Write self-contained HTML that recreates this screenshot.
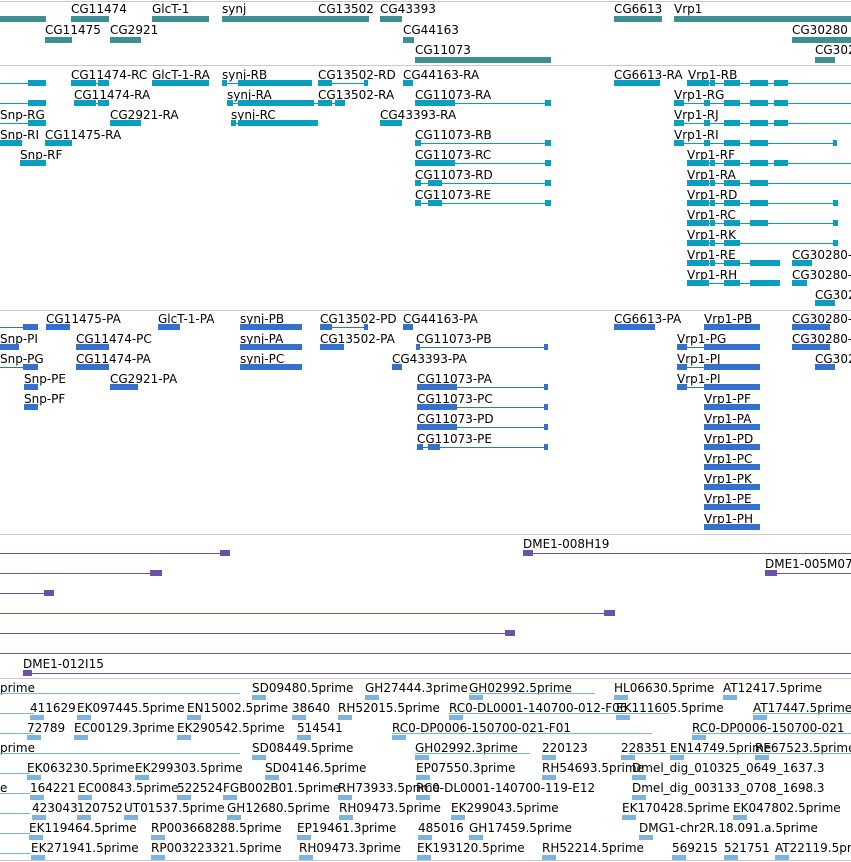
<!DOCTYPE html>
<html><head><meta charset="utf-8">
<style>
html,body{margin:0;padding:0;background:#fff;width:851px;height:862px;overflow:hidden;position:relative}
.t{position:absolute;font-family:"DejaVu Sans","Liberation Sans",sans-serif;font-size:12px;line-height:14px;color:#000;white-space:nowrap}
.r{position:absolute}
</style></head><body>
<div id="c"></div>
<script>
var c=document.getElementById('c'),h='';
function L(x,y,t){h+='<div class="t" style="left:'+x+'px;top:'+(y-2)+'px">'+t+'</div>';}
function B(x,y,w,hh,col){h+='<div class="r" style="left:'+x+'px;top:'+y+'px;width:'+w+'px;height:'+hh+'px;background:'+col+'"></div>';}
function SEP(y){B(0,y,851,1,'#c8c8c8');}
// gene model: line x1..x2 at y (center), exons list [x,w]
function G(x1,x2,y,ex,col,hh){hh=hh||6;B(x1,y,x2-x1,1,col);for(var i=0;i<ex.length;i++)B(ex[i][0],y-Math.floor(hh/2),ex[i][1],hh,col);}
// Track 1
var T1='#3f8e93';
SEP(1);
L(71,4,'CG11474');L(152,4,'GlcT-1');L(222,4,'synj');L(318,4,'CG13502');L(380,4,'CG43393');L(614,4,'CG6613');L(674,4,'Vrp1');
B(0,16,46,6,T1);B(71,16,38,6,T1);B(152,16,57,6,T1);B(222,16,96,6,T1);B(318,16,51,6,T1);B(380,16,22,6,T1);B(614,16,48,6,T1);B(674,16,177,6,T1);
L(45,25,'CG11475');L(110,25,'CG2921');L(403,25,'CG44163');L(792,25,'CG30280');
B(45,37,27,6,T1);B(110,37,31,6,T1);B(403,37,11,6,T1);B(792,37,59,6,T1);
L(415,45,'CG11073');L(815,45,'CG302');
B(415,57,136,6,T1);B(815,57,20,6,T1);
SEP(65);
// Track 2
var C2='#0a9fc0';
var r=[70,90,110,130,150,170,190,210,230,250,270,290];
function Y(i){return r[i]+13;}
L(71,r[0],'CG11474-RC');L(152,r[0],'GlcT-1-RA');L(222,r[0],'synj-RB');L(318,r[0],'CG13502-RD');L(403,r[0],'CG44163-RA');L(614,r[0],'CG6613-RA');L(688,r[0],'Vrp1-RB');
G(0,46,Y(0),[[28,18]],C2);G(71,109,Y(0),[[71,12],[82,14],[98,11]],C2);G(152,209,Y(0),[[152,57]],C2);G(222,312,Y(0),[[222,5],[238,28],[266,38],[304,8]],C2);G(318,368,Y(0),[[318,14],[364,4]],C2);G(403,413,Y(0),[[403,10]],C2);G(614,660,Y(0),[[614,15],[629,15],[643,17]],C2);
G(687,851,Y(0),[[687,22],[710,5],[724,16],[750,18],[774,14]],C2);
L(74,r[1],'CG11474-RA');L(227,r[1],'synj-RA');L(318,r[1],'CG13502-RA');L(415,r[1],'CG11073-RA');L(674,r[1],'Vrp1-RG');
G(0,46,Y(1),[[28,18]],C2);G(74,109,Y(1),[[74,22],[98,11]],C2);G(227,345,Y(1),[[227,6],[238,28],[266,38],[304,10],[318,14],[335,10]],C2);G(415,551,Y(1),[[415,40],[545,6]],C2);G(674,851,Y(1),[[674,10],[704,6],[724,16],[750,18],[774,14]],C2);
L(0,r[2],'Snp-RG');L(110,r[2],'CG2921-RA');L(231,r[2],'synj-RC');L(380,r[2],'CG43393-RA');L(674,r[2],'Vrp1-RJ');
G(0,46,Y(2),[[28,18]],C2);G(110,141,Y(2),[[110,31]],C2);G(231,318,Y(2),[[231,5],[238,28],[266,52]],C2);G(380,402,Y(2),[[380,22]],C2);G(674,851,Y(2),[[674,10],[704,6],[724,16],[750,18],[774,14]],C2);
L(0,r[3],'Snp-RI');L(45,r[3],'CG11475-RA');L(415,r[3],'CG11073-RB');L(674,r[3],'Vrp1-RI');
G(0,22,Y(3),[[0,22]],C2);G(45,72,Y(3),[[45,27]],C2);G(415,551,Y(3),[[415,6],[545,6]],C2);G(674,837,Y(3),[[674,10],[704,6],[724,16],[750,18],[774,0],[833,4]],C2);
L(20,r[4],'Snp-RF');L(415,r[4],'CG11073-RC');L(687,r[4],'Vrp1-RF');
G(20,46,Y(4),[[20,26]],C2);G(415,551,Y(4),[[415,40],[545,6]],C2);G(687,851,Y(4),[[687,22],[710,5],[724,16],[750,18],[774,14]],C2);
L(415,r[5],'CG11073-RD');L(687,r[5],'Vrp1-RA');
G(415,551,Y(5),[[415,6],[428,14],[545,6]],C2);G(687,851,Y(5),[[687,22],[710,5],[724,16],[750,18]],C2);
L(415,r[6],'CG11073-RE');L(687,r[6],'Vrp1-RD');
G(415,551,Y(6),[[415,6],[428,14],[545,6]],C2);G(687,838,Y(6),[[687,22],[710,5],[724,16],[750,18],[774,0],[833,5]],C2);
L(687,r[7],'Vrp1-RC');G(687,838,Y(7),[[687,22],[710,5],[724,16],[750,18],[833,5]],C2);
L(687,r[8],'Vrp1-RK');G(687,838,Y(8),[[687,22],[710,5],[724,16],[833,5]],C2);
L(687,r[9],'Vrp1-RE');L(792,r[9],'CG30280-');G(687,780,Y(9),[[687,22],[710,5],[724,16],[750,30]],C2);G(792,812,Y(9),[[792,20]],C2);
L(687,r[10],'Vrp1-RH');L(792,r[10],'CG30280-');G(687,780,Y(10),[[687,22],[724,16],[750,30]],C2);G(792,807,Y(10),[[792,15]],C2);
L(815,r[11],'CG3028');G(815,835,Y(11),[[815,20]],C2);
SEP(310);
// Track 3
var C3='#3470cc';
var s=[314,334,354,374,394,414,434,454,474,494,514];
function Z(i){return s[i]+13;}
L(46,s[0],'CG11475-PA');L(158,s[0],'GlcT-1-PA');L(240,s[0],'synj-PB');L(320,s[0],'CG13502-PD');L(403,s[0],'CG44163-PA');L(614,s[0],'CG6613-PA');L(704,s[0],'Vrp1-PB');L(792,s[0],'CG30280-');
G(0,38,Z(0),[[23,15]],C3);G(46,70,Z(0),[[46,24]],C3);G(158,180,Z(0),[[158,22]],C3);G(240,302,Z(0),[[240,62]],C3);G(320,368,Z(0),[[320,12],[364,4]],C3);G(403,413,Z(0),[[403,10]],C3);G(614,655,Z(0),[[614,41]],C3);G(704,760,Z(0),[[704,56]],C3);G(792,830,Z(0),[[792,38]],C3);
L(0,s[1],'Snp-PI');L(76,s[1],'CG11474-PC');L(240,s[1],'synj-PA');L(320,s[1],'CG13502-PA');L(416,s[1],'CG11073-PB');L(677,s[1],'Vrp1-PG');L(792,s[1],'CG30280-');
G(0,19,Z(1),[[0,19]],C3);G(76,109,Z(1),[[76,33]],C3);G(240,302,Z(1),[[240,62]],C3);G(320,344,Z(1),[[320,24]],C3);G(416,548,Z(1),[[416,4],[544,4]],C3);G(677,760,Z(1),[[677,10],[704,56]],C3);G(792,830,Z(1),[[792,38]],C3);
L(0,s[2],'Snp-PG');L(76,s[2],'CG11474-PA');L(240,s[2],'synj-PC');L(392,s[2],'CG43393-PA');L(677,s[2],'Vrp1-PJ');L(815,s[2],'CG302');
G(0,38,Z(2),[[23,15]],C3);G(76,109,Z(2),[[76,33]],C3);G(240,302,Z(2),[[240,62]],C3);G(392,402,Z(2),[[392,10]],C3);G(677,760,Z(2),[[677,10],[704,56]],C3);G(815,835,Z(2),[[815,20]],C3);
L(24,s[3],'Snp-PE');L(110,s[3],'CG2921-PA');L(417,s[3],'CG11073-PA');L(677,s[3],'Vrp1-PI');
G(24,38,Z(3),[[24,14]],C3);G(110,138,Z(3),[[110,28]],C3);G(417,548,Z(3),[[417,40],[544,4]],C3);G(677,760,Z(3),[[677,10],[704,56]],C3);
L(24,s[4],'Snp-PF');L(417,s[4],'CG11073-PC');L(704,s[4],'Vrp1-PF');
G(24,38,Z(4),[[24,14]],C3);G(417,548,Z(4),[[417,40],[544,4]],C3);G(704,760,Z(4),[[704,56]],C3);
L(417,s[5],'CG11073-PD');L(704,s[5],'Vrp1-PA');G(417,548,Z(5),[[417,40],[544,4]],C3);G(704,760,Z(5),[[704,56]],C3);
L(417,s[6],'CG11073-PE');L(704,s[6],'Vrp1-PD');G(417,548,Z(6),[[417,6],[428,12],[544,4]],C3);G(704,760,Z(6),[[704,56]],C3);
L(704,s[7],'Vrp1-PC');G(704,760,Z(7),[[704,56]],C3);
L(704,s[8],'Vrp1-PK');G(704,760,Z(8),[[704,56]],C3);
L(704,s[9],'Vrp1-PE');G(704,760,Z(9),[[704,56]],C3);
L(704,s[10],'Vrp1-PH');G(704,760,Z(10),[[704,56]],C3);
SEP(534);
// Track 4
var P='#6b52a8';
L(523,539,'DME1-008H19');G(523,851,553,[[523,10]],P);
G(0,230,553,[[220,10]],P);
L(765,559,'DME1-005M07');G(765,851,573,[[765,12]],P);
G(0,162,573,[[150,12]],P);
G(0,54,593,[[44,10]],P);
G(0,615,613,[[604,11]],P);
G(0,515,633,[[505,10]],P);
G(0,851,653,[],P);
L(23,659,'DME1-012I15');G(23,851,673,[[23,9]],P);
SEP(678);
// Track 5
var E='#7eb3de';
var rows=[
[[0,'prime'],[252,'SD09480.5prime'],[365,'GH27444.3prime'],[469,'GH02992.5prime'],[614,'HL06630.5prime'],[723,'AT12417.5prime']],
[[30,'411629'],[77,'EK097445.5prime'],[187,'EN15002.5prime'],[292,'38640'],[338,'RH52015.5prime'],[449,'RC0-DL0001-140700-012-F06'],[616,'EK111605.5prime'],[753,'AT17447.5prime']],
[[27,'72789'],[74,'EC00129.3prime'],[177,'EK290542.5prime'],[297,'514541'],[392,'RC0-DP0006-150700-021-F01'],[692,'RC0-DP0006-150700-021']],
[[0,'prime'],[252,'SD08449.5prime'],[415,'GH02992.3prime'],[542,'220123'],[621,'228351'],[670,'EN14749.5prime'],[755,'RE67523.5prime']],
[[27,'EK063230.5prime'],[135,'EK299303.5prime'],[265,'SD04146.5prime'],[416,'EP07550.3prime'],[542,'RH54693.5prime'],[632,'Dmel_dig_010325_0649_1637.3']],
[[0,'e'],[30,'164221'],[78,'EC00843.5prime'],[177,'522524'],[223,'FGB002B01.5prime'],[338,'RH73933.5prime'],[416,'RC0-DL0001-140700-119-E12'],[632,'Dmel_dig_003133_0708_1698.3']],
[[32,'423043'],[77,'120752'],[124,'UT01537.5prime'],[227,'GH12680.5prime'],[339,'RH09473.5prime'],[451,'EK299043.5prime'],[622,'EK170428.5prime'],[733,'EK047802.5prime']],
[[29,'EK119464.5prime'],[151,'RP003668288.5prime'],[297,'EP19461.3prime'],[418,'485016'],[469,'GH17459.5prime'],[639,'DMG1-chr2R.18.091.a.5prime']],
[[31,'EK271941.5prime'],[151,'RP003223321.5prime'],[299,'RH09473.3prime'],[417,'EK193120.5prime'],[542,'RH52214.5prime'],[672,'569215'],[724,'521751'],[775,'AT22119.5prime']]
];
for(var i=0;i<rows.length;i++){var y=683+i*20;for(var j=0;j<rows[i].length;j++){var it=rows[i][j];L(it[0],y,it[1]);if(it[0]>5)B(it[0],y+12,14,5,E);}}
// long lines
B(0,693,240,1,E);B(0,713,34,1,E);B(0,733,34,1,E);B(0,753,240,1,E);B(0,773,30,1,E);B(0,793,30,1,E);B(0,813,30,1,E);B(0,833,30,1,E);B(0,853,30,1,E);
B(165,693,75,1,E);B(469,693,126,1,E);B(392,733,260,1,E);B(692,733,159,1,E);B(415,753,115,1,E);B(629,753,222,1,E);B(449,713,220,1,E);B(753,713,98,1,E);
SEP(860);
c.innerHTML=h;
</script>
</body></html>
